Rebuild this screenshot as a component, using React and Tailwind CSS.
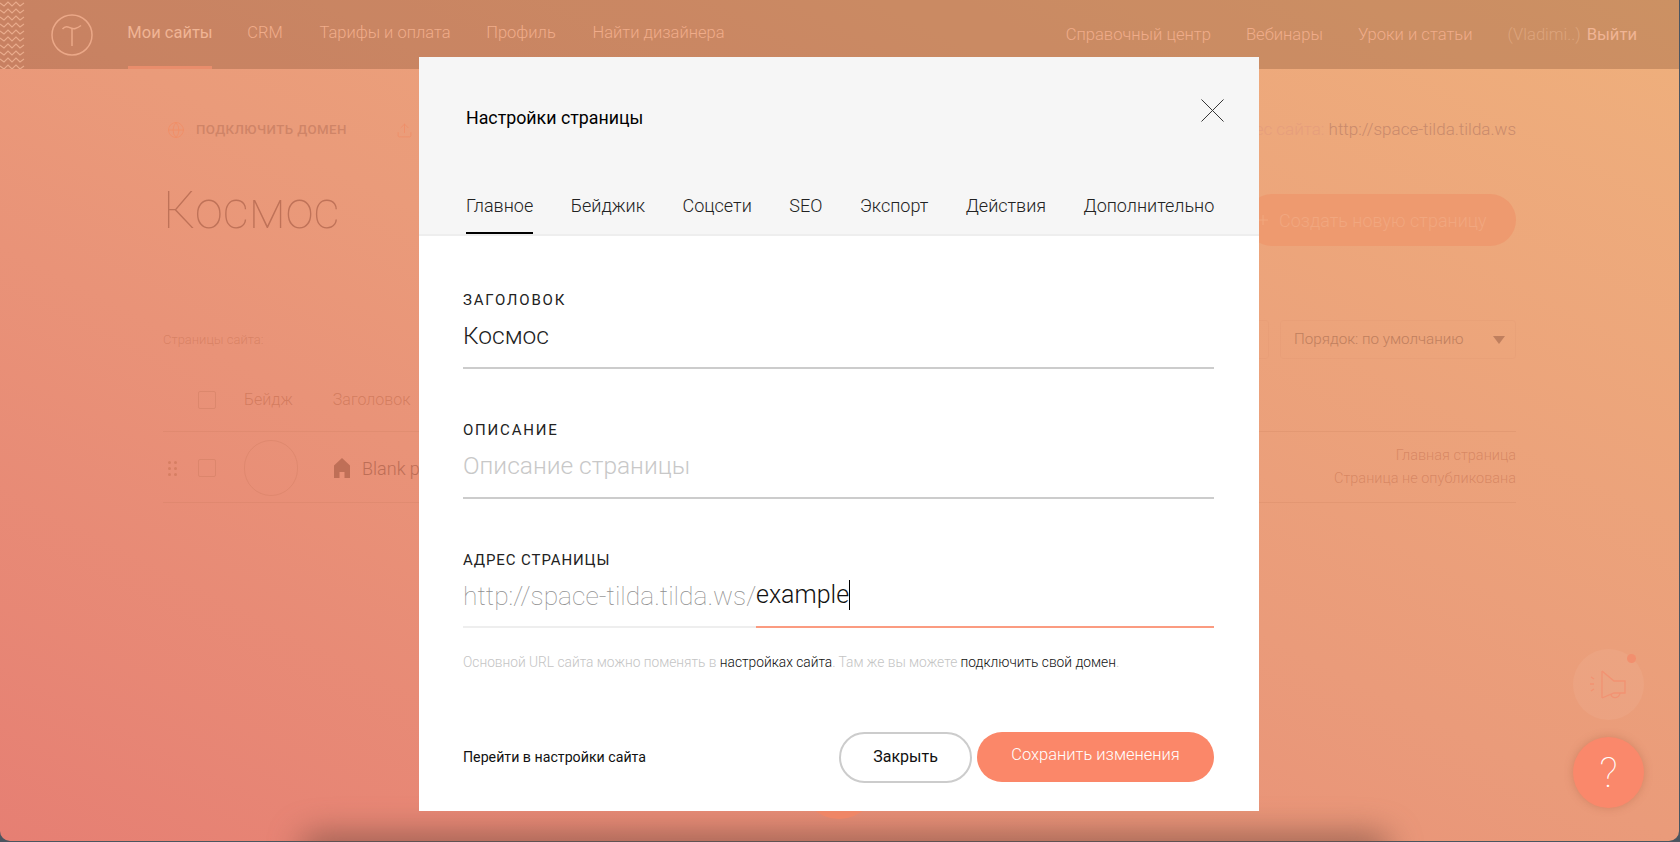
import React from 'react';
import { Globe, Upload, Plus, X } from 'lucide-react';

const leftNav = [
  { label: 'Мои сайты', w: 'w-[84px]', active: true },
  { label: 'CRM', w: 'w-[38px]' },
  { label: 'Тарифы и оплата', w: 'w-[134px]' },
  { label: 'Профиль', w: 'w-[70px]' },
  { label: 'Найти дизайнера', w: 'w-[137px]' },
];

const tabs = ['Главное', 'Бейджик', 'Соцсети', 'SEO', 'Экспорт', 'Действия', 'Дополнительно'];

const Logo = () => (
  <svg width="42" height="42" viewBox="0 0 42 42" fill="none" stroke="#eba888" strokeWidth="1.5">
    <circle cx="21" cy="21" r="20" />
    <path d="M11.500 15c1.800-2.200 3.500-2.800 5.500-2 2.300 1 4.800 2.200 7.300 1.500 2-.6 4-1.600 5.700-3" />
    <path d="M21 14.500V32" />
  </svg>
);

const Waves = () => (
  <svg width="25" height="69" viewBox="0 0 25 69" fill="none" stroke="#e9ab8c" strokeWidth="1.1">
    {[3, 10, 17, 24, 31, 38, 45, 52, 59, 66].map((y) => (
      <path key={y} d={`M0 ${y}l4 3 4-4 4 4 4-4 4 4 4-3`} />
    ))}
  </svg>
);

const Field = ({ label, children }) => (
  <div className="h-[130px]">
    <div className="h-5 text-[15px] leading-5 tracking-[1.8px] text-[#222]">{label}</div>
    <div className="h-[57px] pt-px text-[24.5px] leading-[50px] font-light whitespace-nowrap">{children}</div>
    <div className="h-0.5 bg-[#cccccc]" />
  </div>
);

export default function App() {
  return (
    <div className="relative h-[842px] w-[1680px] overflow-hidden bg-[#4b5560] font-['Roboto',sans-serif]">
      {/* страница под модалкой */}
      <div className="h-[841px] w-[1679px] rounded-b-[10px] bg-linear-to-tr from-[#e67f73] via-[#ea9b7a] to-[#efb07c]">
        <header className="flex h-[69px] items-center bg-[#7a4a2a]/30 text-[16.6px] font-light text-[#f0ac8a]">
          <Waves />
          <div className="ml-[26px] mr-[35px]"><Logo /></div>
          <nav className="flex h-full gap-[34px] text-[16.5px]">
            {leftNav.map((item) => (
              <a key={item.label} className={`flex h-full items-center justify-center whitespace-nowrap ${item.w} ${item.active ? 'border-b-[3px] border-[#e98d6c] font-normal text-[#f0b494]' : 'pb-[3px]'}`}>
                {item.label}
              </a>
            ))}
          </nav>
          <div className="ml-auto mr-[42px] flex items-center gap-[35px] whitespace-nowrap pt-[2px]">
            <span>Справочный центр</span>
            <span>Вебинары</span>
            <span>Уроки и статьи</span>
            <span className="-mr-[29px] text-[#dda47c]">(Vladimi..)</span>
            <span className="font-normal text-[#f0b494]">Выйти</span>
          </div>
        </header>

        <main className="ml-[163px] w-[1353px]">
          <div className="mt-[51px] flex h-5 items-center justify-between">
            <div className="flex items-center text-[13.300px] font-medium tracking-[0.4px] text-[#c87e62]/80">
              <Globe size={18} strokeWidth={1.2} className="mr-[11px] ml-[4px] text-[#f08e68]" />
              <span>ПОДКЛЮЧИТЬ ДОМЕН</span>
              <Upload size={17} strokeWidth={1.2} className="ml-[49px] text-[#f08e68]" />
            </div>
            <div className="text-[17px] font-light text-[#c98a6c]">
              <span className="text-[#e69e7c]">Адрес сайта: </span>http://space-tilda.tilda.ws
            </div>
          </div>

          <div className="mt-[54px] flex h-[52px] items-start justify-between">
            <h1 className="-mt-[18px] text-[51px] leading-[70px] font-thin text-[#bf7258]">Космос</h1>
            <button className="flex h-[52px] w-[270px] items-center rounded-full bg-[#ee9a6f] pl-[9px] text-[18px] font-light text-[#f1a77f]">
              <Plus size={16} strokeWidth={1.5} className="mr-[8px]" />
              Создать новую страницу
            </button>
          </div>

          <div className="mt-[74px] flex h-[39px] items-center justify-between">
            <span className="text-[13px] font-light text-[#b8603f]/35">Страницы сайта:</span>
            <div className="flex gap-[11px]">
              <span className="h-[39px] w-[40px] rounded-[3px] border border-[#b86a4a]/5" />
              <div className="flex h-[39px] w-[236px] items-center justify-between rounded-[3px] border border-[#b86a4a]/5 pl-[13px] pr-[10px] text-[15.200px] font-light text-[#c07f5e]">
                Порядок: по умолчанию
                <span className="h-0 w-0 border-x-[6px] border-t-[8px] border-x-transparent border-t-[#c07f5e]" />
              </div>
            </div>
          </div>

          <div className="mt-[21px] flex h-[52px] items-center border-b border-[#b86a4a]/15 pb-[12px] text-[16px] font-light text-[#b8603f]/45">
            <span className="ml-[35px] h-[18px] w-[18px] rounded-[2px] border border-[#b86a4a]/25" />
            <span className="ml-[28px]">Бейдж</span>
            <span className="ml-[40px]">Заголовок</span>
          </div>

          <div className="flex h-[71px] items-center justify-between border-b border-[#b86a4a]/15">
            <div className="flex items-center pt-[2px]">
              <div className="ml-[5px] grid grid-cols-2 gap-x-[3px] gap-y-[3px]">
                {[0, 1, 2, 3, 4, 5].map((i) => <span key={i} className="h-[3px] w-[3px] rounded-full bg-[#b8603f]/35" />)}
              </div>
              <span className="ml-[21px] h-[18px] w-[18px] rounded-[2px] border border-[#b86a4a]/25" />
              <span className="ml-[28px] h-[56px] w-[54px] rounded-full border border-[#b86a4a]/20" />
              <svg className="ml-[35px]" width="18" height="20" viewBox="0 0 18 20" fill="#bf6f57">
                <path d="M9 0l8 7.500V20h-5.500v-6h-5v6H1V7.500z" />
              </svg>
              <span className="ml-[11px] text-[18px] font-light text-[#bd6e56]">Blank page</span>
            </div>
            <div className="text-right text-[14.500px] leading-[23px] font-light text-[#b8603f]/40">
              <div>Главная страница</div>
              <div>Страница не опубликована</div>
            </div>
          </div>
        </main>
      </div>

      {/* тень и кружок под нижним краем модалки */}
      <div className="absolute left-[300px] top-[834px] h-[34px] w-[1090px] rounded-full bg-[#7a4f42]/70 blur-[16px]" />
      <div className="absolute left-[800px] top-[780px] h-[39px] w-[78px] rounded-b-full bg-[#ef8666]" />

      {/* виджеты справа */}
      <div className="absolute left-[1573px] top-[649px] flex h-[71px] w-[71px] items-center justify-center rounded-full bg-white/5">
        <svg width="38" height="32" viewBox="0 0 38 32" fill="none" stroke="#f29272" strokeWidth="1.3">
          <path d="M12 2v27M12 2l12 10h11v12H24l-12 5" />
          <path d="M21 25c0 5 8 5 9-1" />
          <path d="M1 8l3 2M0 15h4M1 22l3-2" />
        </svg>
        <span className="absolute left-[54px] top-[5px] h-[9px] w-[9px] rounded-full bg-[#f28f6e]" />
      </div>
      <div className="absolute left-[1573px] top-[737px] flex h-[71px] w-[71px] items-center justify-center rounded-full bg-[#fa886b] text-[42px] font-thin text-white shadow-[0_0_8px_rgba(160,90,60,0.35)]">
        ?
      </div>

      {/* модалка */}
      <div className="absolute left-[419px] top-[57px] flex h-[754px] w-[840px] flex-col bg-white text-black">
        <div className="relative h-[179px] border-b-2 border-[#eeeeee] bg-[#f6f6f6] pl-[47px]">
          <div className="pt-[47px] text-[17.800px] leading-[28px]">Настройки страницы</div>
          <button className="absolute left-[772px] top-[32px] text-[#333]">
            <X size={43} strokeWidth={0.55} />
          </button>
          <div className="absolute bottom-0 left-[47px] flex h-[48px] gap-[37.500px] text-[18px] font-light text-[#222]">
            {tabs.map((tab, i) => (
              <div key={tab} className={`h-[48px] pt-[7px] leading-[26px] ${i === 0 ? 'border-b-2 border-black' : ''}`}>{tab}</div>
            ))}
          </div>
        </div>

        <div className="flex flex-1 flex-col pl-[44px] pr-[45px] pt-[54px]">
          <Field label="ЗАГОЛОВОК"><span className="text-[#222]">Космос</span></Field>
          <Field label="ОПИСАНИЕ"><span className="text-[#c8c8c8]">Описание страницы</span></Field>
          <div>
            <div className="h-5 text-[15px] leading-5 tracking-[0.9px] text-[#222]">АДРЕС СТРАНИЦЫ</div>
            <div className="flex h-[56px] whitespace-nowrap text-[25px] leading-[52px] font-light">
              <span className="w-[293px] text-[26.400px] font-thin text-[#8f8f8f]">http://space-tilda.tilda.ws/</span>
              <span className="leading-[50px] text-[#111]">example</span>
              <span className="mt-[10px] h-[30px] w-px bg-black" />
            </div>
            <div className="flex h-0.5">
              <div className="w-[293px] bg-[#eeeeee]" />
              <div className="flex-1 bg-[#fb9b80]" />
            </div>
          </div>
          <div className="mt-[24px] text-[13.750px] leading-5 font-light text-[#c4c4c4]">
            Основной URL сайта можно поменять в <span className="text-[#111]">настройках сайта</span>. Там же вы можете <span className="text-[#111]">подключить свой домен</span>.
          </div>
          <div className="mt-[60px] flex items-center justify-between">
            <a className="text-[14.200px] text-[#111]">Перейти в настройки сайта</a>
            <div className="flex gap-[5px]">
              <button className="h-[51px] w-[133px] rounded-full border-2 border-[#cccccc] pb-[2px] text-[16px] text-[#111]">Закрыть</button>
              <button className="h-[50px] w-[237px] rounded-full bg-[#fb8769] pb-[3px] text-[16.500px] font-light text-white">Сохранить изменения</button>
            </div>
          </div>
        </div>
      </div>
    </div>
  );
}
